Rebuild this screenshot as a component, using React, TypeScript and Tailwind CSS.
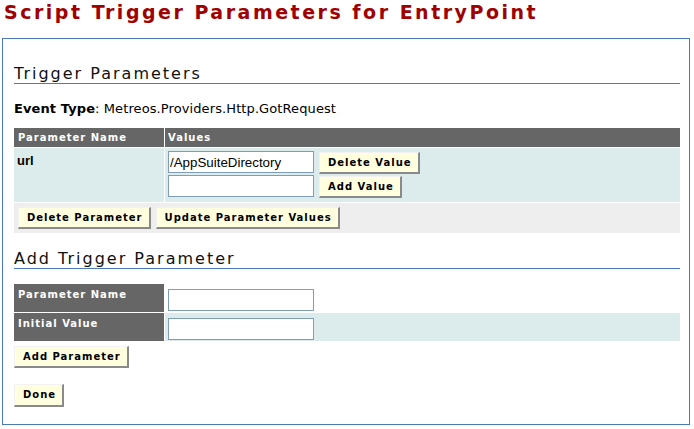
import React from "react";

function Btn({ children, className = "" }: { children: React.ReactNode; className?: string }) {
    return <button className={"inline-flex items-center h-[22px] pl-[8px] pr-[6px] bg-[#ffffe0] border-t border-l border-r-2 border-b-2 border-t-[#f2f2f2] border-l-[#f2f2f2] border-r-[#8a8a8a] border-b-[#8a8a8a] text-[10px] font-bold tracking-[1px] text-black font-['DejaVu_Sans',sans-serif] " + className}>
        {children}
    </button>
}

function TextBox({ value = "" }: { value?: string }) {
    return <input readOnly value={value} className="w-[146px] h-[22px] border border-[#7f9db9] bg-white pl-[1px] text-[13.33px] text-black font-['Liberation_Sans',Arial,sans-serif] outline-none" />
}

function Heading({ children, className = "" }: { children: React.ReactNode; className?: string }) {
    return <div className={"h-[19px] leading-[18px] text-[16px] tracking-[2px] text-[#111] border-b border-[#4a7ab8] " + className}>
        {children}
    </div>
}

export default function App() {
    return <div className="w-[694px] h-[429px] bg-white overflow-hidden font-['DejaVu_Sans',sans-serif] text-black">
        <div className="h-[38px] pl-[4px] pt-[1px] text-[19px] leading-[22px] font-bold tracking-[2.5px] text-[#a00000]">
            Script Trigger Parameters for EntryPoint
        </div>
        <div className="ml-[2px] w-[688px] h-[387px] border border-[#4a7ab8] pl-[11px] pr-[9px] flex flex-col">
            <Heading className="mt-[26px]">Trigger Parameters</Heading>
            <div className="mt-[17px] text-[13px] leading-[15px] tracking-[0.1px]">
                <span className="font-bold">Event Type</span>: Metreos.Providers.Http.GotRequest
            </div>

            <div className="mt-[12px] grid grid-cols-[150px_1fr] gap-px">
                <div className="h-[19px] bg-[#666666] pl-[4px] text-[10px] leading-[19px] font-bold tracking-[1px] text-white">Parameter Name</div>
                <div className="h-[19px] bg-[#666666] pl-[3px] text-[10px] leading-[19px] font-bold tracking-[1px] text-white">Values</div>

                <div className="h-[54px] bg-[#dcecec] pl-[3px] pt-[3px] text-[13px] font-bold font-['Liberation_Sans',Arial,sans-serif]">url</div>
                <div className="h-[54px] bg-[#dcecec] pl-[3px] pt-[3px] flex flex-col gap-px">
                    <div className="flex items-start gap-[5px]">
                        <TextBox value="/AppSuiteDirectory" />
                        <Btn className="mt-px">Delete Value</Btn>
                    </div>
                    <div className="flex items-start gap-[5px]">
                        <TextBox />
                        <Btn className="mt-px">Add Value</Btn>
                    </div>
                </div>

                <div className="col-span-2 h-[30px] bg-[#eeeeee] pl-[4px] pt-[4px] flex items-start gap-[5px]">
                    <Btn>Delete Parameter</Btn>
                    <Btn>Update Parameter Values</Btn>
                </div>
            </div>

            <Heading className="mt-[17px]">Add Trigger Parameter</Heading>

            <div className="mt-[15px] grid grid-cols-[150px_1fr] gap-px">
                <div className="h-[28px] bg-[#666666] pl-[4px] pt-[3px] text-[10px] leading-[15px] font-bold tracking-[1px] text-white">Parameter Name</div>
                <div className="h-[28px] pl-[3px] pt-[3px]"><TextBox /></div>
                <div className="h-[28px] bg-[#666666] pl-[4px] pt-[3px] text-[10px] leading-[15px] font-bold tracking-[1px] text-white">Initial Value</div>
                <div className="h-[28px] bg-[#dcecec] pl-[3px] pt-[3px]"><TextBox /></div>
            </div>

            <div className="mt-[2px]">
                <Btn>Add Parameter</Btn>
            </div>
            <div className="mt-[13px]">
                <Btn className="h-[23px]">Done</Btn>
            </div>
        </div>
    </div>
}
